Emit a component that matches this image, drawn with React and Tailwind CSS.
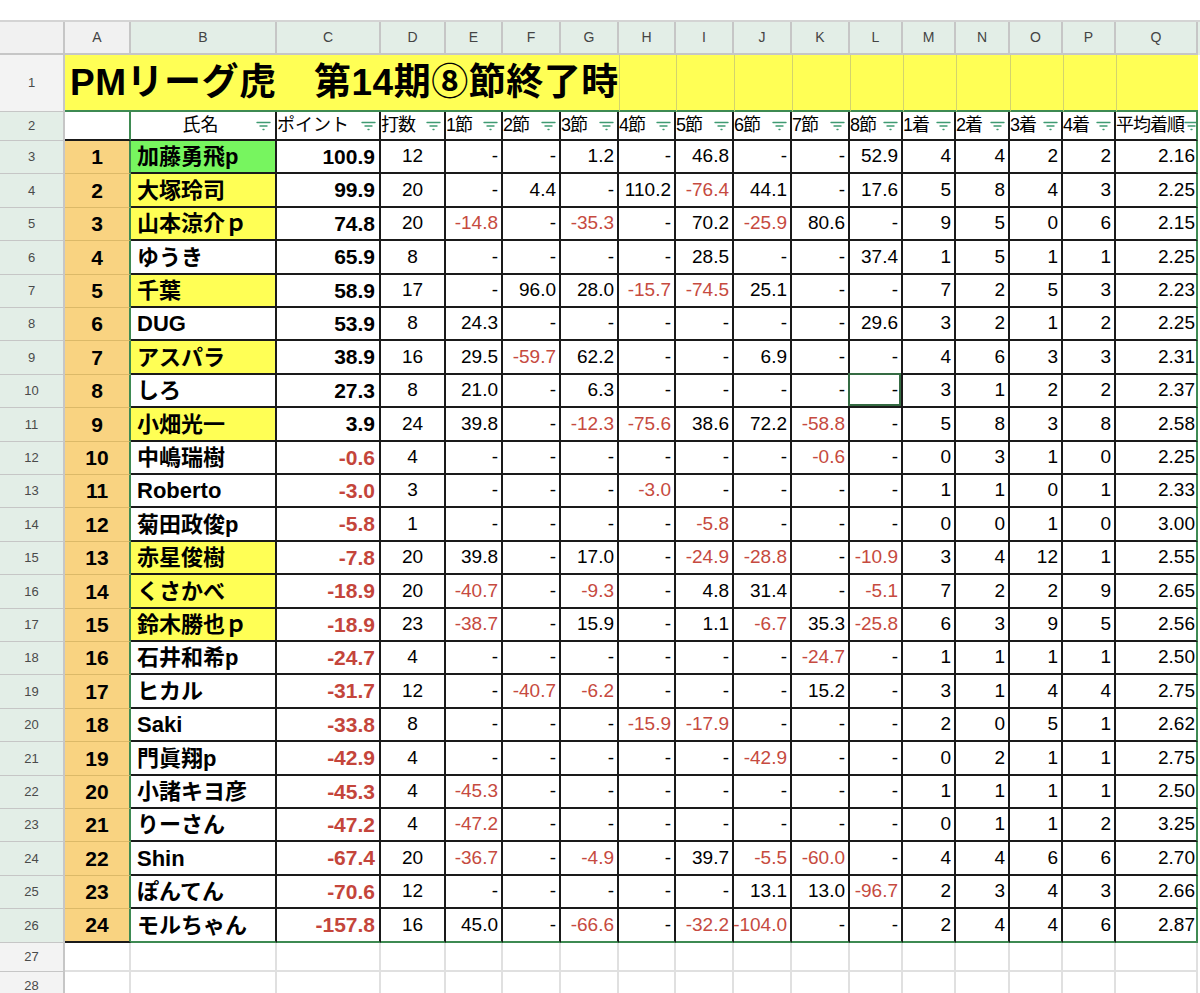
import React from "react";

const widths = [
  "w-[66px]", "w-[146px]", "w-[104px]", "w-[65px]", "w-[57px]", "w-[58px]", "w-[58px]", "w-[57px]",
  "w-[58px]", "w-[58px]", "w-[58px]", "w-[53px]", "w-[53px]", "w-[54px]", "w-[53px]", "w-[53px]", "w-[82px]",
];
const letters = "ABCDEFGHIJKLMNOPQ".split("");

const heads = ["打数", "1節", "2節", "3節", "4節", "5節", "6節", "7節", "8節", "1着", "2着", "3着", "4着", "平均着順"];

// [順位, 氏名, 色, ポイント, 打数, 1〜8節, 1〜4着, 平均着順]
const players = [
  [1, "加藤勇飛p", "g", "100.9", 12, ["-", "-", "1.2", "-", "46.8", "-", "-", "52.9"], [4, 4, 2, 2], "2.16"],
  [2, "大塚玲司", "y", "99.9", 20, ["-", "4.4", "-", "110.2", "-76.4", "44.1", "-", "17.6"], [5, 8, 4, 3], "2.25"],
  [3, "山本涼介ｐ", "y", "74.8", 20, ["-14.8", "-", "-35.3", "-", "70.2", "-25.9", "80.6", "-"], [9, 5, 0, 6], "2.15"],
  [4, "ゆうき", "", "65.9", 8, ["-", "-", "-", "-", "28.5", "-", "-", "37.4"], [1, 5, 1, 1], "2.25"],
  [5, "千葉", "y", "58.9", 17, ["-", "96.0", "28.0", "-15.7", "-74.5", "25.1", "-", "-"], [7, 2, 5, 3], "2.23"],
  [6, "DUG", "", "53.9", 8, ["24.3", "-", "-", "-", "-", "-", "-", "29.6"], [3, 2, 1, 2], "2.25"],
  [7, "アスパラ", "y", "38.9", 16, ["29.5", "-59.7", "62.2", "-", "-", "6.9", "-", "-"], [4, 6, 3, 3], "2.31"],
  [8, "しろ", "", "27.3", 8, ["21.0", "-", "6.3", "-", "-", "-", "-", "-"], [3, 1, 2, 2], "2.37"],
  [9, "小畑光一", "y", "3.9", 24, ["39.8", "-", "-12.3", "-75.6", "38.6", "72.2", "-58.8", "-"], [5, 8, 3, 8], "2.58"],
  [10, "中嶋瑞樹", "", "-0.6", 4, ["-", "-", "-", "-", "-", "-", "-0.6", "-"], [0, 3, 1, 0], "2.25"],
  [11, "Roberto", "", "-3.0", 3, ["-", "-", "-", "-3.0", "-", "-", "-", "-"], [1, 1, 0, 1], "2.33"],
  [12, "菊田政俊p", "", "-5.8", 1, ["-", "-", "-", "-", "-5.8", "-", "-", "-"], [0, 0, 1, 0], "3.00"],
  [13, "赤星俊樹", "y", "-7.8", 20, ["39.8", "-", "17.0", "-", "-24.9", "-28.8", "-", "-10.9"], [3, 4, 12, 1], "2.55"],
  [14, "くさかべ", "y", "-18.9", 20, ["-40.7", "-", "-9.3", "-", "4.8", "31.4", "-", "-5.1"], [7, 2, 2, 9], "2.65"],
  [15, "鈴木勝也ｐ", "y", "-18.9", 23, ["-38.7", "-", "15.9", "-", "1.1", "-6.7", "35.3", "-25.8"], [6, 3, 9, 5], "2.56"],
  [16, "石井和希p", "", "-24.7", 4, ["-", "-", "-", "-", "-", "-", "-24.7", "-"], [1, 1, 1, 1], "2.50"],
  [17, "ヒカル", "", "-31.7", 12, ["-", "-40.7", "-6.2", "-", "-", "-", "15.2", "-"], [3, 1, 4, 4], "2.75"],
  [18, "Saki", "", "-33.8", 8, ["-", "-", "-", "-15.9", "-17.9", "-", "-", "-"], [2, 0, 5, 1], "2.62"],
  [19, "門眞翔p", "", "-42.9", 4, ["-", "-", "-", "-", "-", "-42.9", "-", "-"], [0, 2, 1, 1], "2.75"],
  [20, "小諸キヨ彦", "", "-45.3", 4, ["-45.3", "-", "-", "-", "-", "-", "-", "-"], [1, 1, 1, 1], "2.50"],
  [21, "りーさん", "", "-47.2", 4, ["-47.2", "-", "-", "-", "-", "-", "-", "-"], [0, 1, 1, 2], "3.25"],
  [22, "Shin", "", "-67.4", 20, ["-36.7", "-", "-4.9", "-", "39.7", "-5.5", "-60.0", "-"], [4, 4, 6, 6], "2.70"],
  [23, "ぽんてん", "", "-70.6", 12, ["-", "-", "-", "-", "-", "13.1", "13.0", "-96.7"], [2, 3, 4, 3], "2.66"],
  [24, "モルちゃん", "", "-157.8", 16, ["45.0", "-", "-66.6", "-", "-32.2", "-104.0", "-", "-"], [2, 4, 4, 6], "2.87"],
];

const FilterIcon = () => (
  <svg width="15" height="10" viewBox="0 0 15 10" className="shrink-0">
    <g stroke="#3f9a72" strokeWidth="1.4" strokeLinecap="round">
      <line x1="1" y1="1.5" x2="14" y2="1.5" />
      <line x1="4" y1="5" x2="11" y2="5" />
      <line x1="7" y1="8.5" x2="8" y2="8.5" />
    </g>
  </svg>
);

const RowHead = ({ n, green }) => (
  <div
    className={`w-[65px] shrink-0 flex items-center justify-center border-r-2 border-b border-[#c6c6c6] text-[13px] text-[#4a4a4a] ${
      green ? "bg-[#e3eee7]" : "bg-[#f3f3f3]"
    }`}
  >
    {n}
  </div>
);

const neg = (v) => String(v).startsWith("-") && String(v) !== "-";

const App = () => {
  return (
    <div className="w-[1200px] h-[993px] overflow-hidden bg-white text-black font-[Liberation_Sans,Noto_Sans_CJK_JP,sans-serif]">
      <div className="h-[20px]" />

      {/* 列見出し */}
      <div className="flex h-[35px] border-t-2 border-[#d4d4d4]">
        <div className="w-[65px] shrink-0 bg-[#f1f1f1] border-r-2 border-b-2 border-[#c6c6c6]" />
        {letters.map((l, i) => (
          <div
            key={l}
            className={`${widths[i]} shrink-0 flex items-center justify-center border-r-2 border-b-2 border-[#c6c6c6] text-[14px] text-[#444] ${
              i === 0 ? "bg-[#f1f1f1]" : "bg-[#e3eee7]"
            }`}
          >
            {l}
          </div>
        ))}
        <div className="flex-1 bg-[#e3eee7]" />
      </div>

      {/* 1行目 タイトル */}
      <div className="flex h-[57px]">
        <RowHead n={1} />
        <div className="w-[554px] shrink-0 bg-[#ffff55] border-b-2 border-[#3e8a52] flex items-center pl-[5px] text-[37px] font-bold whitespace-nowrap tracking-[0.5px]">
          PMリーグ虎　第14期⑧節終了時
        </div>
        {widths.slice(7).map((w, i) => (
          <div key={i} className={`${w} shrink-0 bg-[#ffff55] border-l border-l-[#d3d36c] border-b-2 border-b-[#3e8a52]`} />
        ))}
      </div>

      {/* 2行目 見出し */}
      <div className="flex h-[29px]">
        <RowHead n={2} green />
        <div className="w-[66px] shrink-0 bg-white border-r-2 border-r-[#3e8a52] border-b-2 border-b-[#1a1a1a]" />
        <div className="w-[146px] shrink-0 flex items-center border-r-2 border-b-2 border-[#1a1a1a] pr-[4px] text-[18px]">
          <span className="flex-1 text-center pl-[14px]">氏名</span>
          <FilterIcon />
        </div>
        <div className="w-[104px] shrink-0 flex items-center justify-between border-r-2 border-b-2 border-[#1a1a1a] pr-[3px] text-[18px]">
          <span>ポイント</span>
          <FilterIcon />
        </div>
        {heads.map((h, i) => (
          <div
            key={h}
            className={`${widths[i + 3]} shrink-0 flex items-center justify-between overflow-hidden whitespace-nowrap border-r-2 border-b-2 border-b-[#1a1a1a] pr-[3px] text-[18px] tracking-[-1px] ${
              i === heads.length - 1 ? "border-r-[#3e8a52] pr-[1px]" : "border-r-[#1a1a1a]"
            }`}
          >
            <span>{h}</span>
            <FilterIcon />
          </div>
        ))}
      </div>

      {/* データ行 */}
      {players.map((p, idx) => {
        const [rank, name, hl, pt, games, sets, places, avg] = p;
        const last = idx === players.length - 1;
        const h = idx % 5 === 1 || idx % 5 === 3 ? "h-[34px]" : "h-[33px]";
        const bottom = last ? "border-b-[#3e8a52]" : "border-b-[#1a1a1a]";
        const nameBg = hl === "g" ? "bg-[#77f55f]" : hl === "y" ? "bg-[#ffff55]" : "bg-white";
        return (
          <div key={rank} className={`flex ${h}`}>
            <RowHead n={idx + 3} green />
            <div
              className={`w-[66px] shrink-0 bg-[#f9d381] flex items-center justify-center border-r-2 border-r-[#3e8a52] text-[21px] font-bold ${
                last ? "border-b-2 border-b-[#1a1a1a]" : "border-b border-b-[#dcb968]"
              }`}
            >
              {rank}
            </div>
            <div className={`w-[146px] shrink-0 ${nameBg} flex items-center pl-[6px] border-r-2 border-r-[#1a1a1a] border-b-2 ${bottom} text-[22px] font-bold whitespace-nowrap`}>
              {name}
            </div>
            <div
              className={`w-[104px] shrink-0 flex items-center justify-end pr-[4px] border-r-2 border-r-[#1a1a1a] border-b-2 ${bottom} text-[21px] font-bold ${
                neg(pt) ? "text-[#c4453b]" : ""
              }`}
            >
              {pt}
            </div>
            <div className={`w-[65px] shrink-0 flex items-center justify-center border-r-2 border-r-[#1a1a1a] border-b-2 ${bottom} text-[19px]`}>
              {games}
            </div>
            {sets.map((v, j) => (
              <div
                key={j}
                className={`${widths[j + 4]} relative shrink-0 flex items-center justify-end pr-[3px] overflow-visible border-r-2 border-r-[#1a1a1a] border-b-2 ${bottom} text-[19px] whitespace-nowrap ${
                  neg(v) ? "text-[#c64a40]" : ""
                }`}
              >
                {v}
                {idx === 7 && j === 7 && (
                  <div className="absolute -left-[2px] -top-[2px] right-0 bottom-0 border-2 border-[#356b43] z-10" />
                )}
              </div>
            ))}
            {places.map((v, j) => (
              <div
                key={j}
                className={`${widths[j + 12]} shrink-0 flex items-center justify-end pr-[3px] border-r-2 border-r-[#1a1a1a] border-b-2 ${bottom} text-[19px]`}
              >
                {v}
              </div>
            ))}
            <div className={`w-[82px] shrink-0 flex items-center justify-end pr-[1px] border-r-2 border-r-[#3e8a52] border-b-2 ${bottom} text-[19px]`}>
              {avg}
            </div>
          </div>
        );
      })}

      {/* 空行 */}
      {[27, 28].map((n) => (
        <div key={n} className="flex h-[29px]">
          <RowHead n={n} />
          {widths.map((w, i) => (
            <div key={i} className={`${w} shrink-0 border-r-2 border-b-2 border-[#e0e0e0]`} />
          ))}
        </div>
      ))}
    </div>
  );
};

export default App;
